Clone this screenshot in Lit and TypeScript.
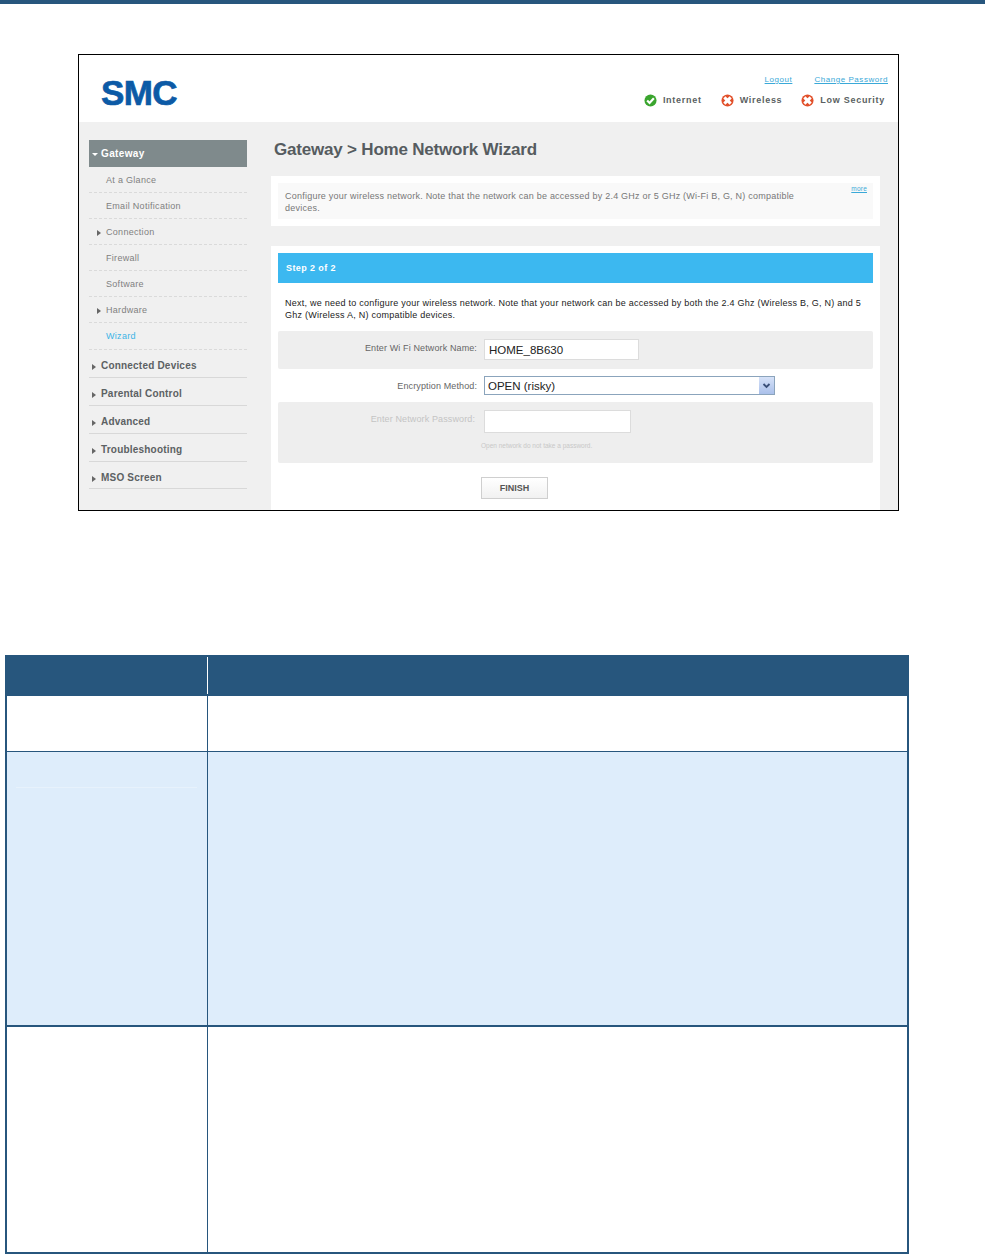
import { LitElement, html, css, svg } from "lit";
import { customElement } from "lit/decorators.js";

const subItems = [
  { label: "At a Glance" },
  { label: "Email Notification" },
  { label: "Connection", arrow: true },
  { label: "Firewall" },
  { label: "Software" },
  { label: "Hardware", arrow: true },
  { label: "Wizard", active: true },
];

const topItems = ["Connected Devices", "Parental Control", "Advanced", "Troubleshooting", "MSO Screen"];

const okIcon = svg`<svg class="status-icon" viewBox="0 0 14 14">
  <circle cx="7" cy="7" r="6.5" fill="#3aa52e"/>
  <path d="M3.4 7 6 9.6 10.6 4.6" fill="none" stroke="#fff" stroke-width="2.4"/>
</svg>`;

const badIcon = svg`<svg class="status-icon" viewBox="0 0 14 14">
  <circle cx="7" cy="7" r="6.5" fill="#e2502a"/>
  <path d="M3.6 3.6 10.4 10.4M10.4 3.6 3.6 10.4" stroke="#fff" stroke-width="3.2"/>
  <circle cx="7" cy="7" r="1.6" fill="#fff"/>
</svg>`;

@customElement("app-root")
export class AppRoot extends LitElement {
  static styles = css`
    :host {
      display: block;
      width: 985px;
      height: 1254px;
      overflow: hidden;
      background: #fff;
      font-family: "Liberation Sans", Arial, sans-serif;
    }

    .top-rule {
      height: 4px;
      background: #27567d;
    }

    /* router screenshot */
    .shot {
      box-sizing: border-box;
      width: 821px;
      height: 457px;
      margin: 50px 0 0 78px;
      border: 1px solid #000;
      overflow: hidden;
      background: #f0f0f0;
    }

    .shot-head {
      height: 67px;
      background: #fff;
      display: flex;
      justify-content: space-between;
      padding: 0 10px 0 22px;
    }

    .logo {
      margin-top: 19px;
      font-size: 35px;
      line-height: 37px;
      font-weight: 700;
      letter-spacing: -0.6px;
      color: #0c5aa6;
      -webkit-text-stroke: 0.7px #0c5aa6;
    }

    .head-right {
      display: flex;
      flex-direction: column;
      align-items: flex-end;
    }

    .links {
      display: flex;
      gap: 22px;
      margin-top: 20px;
      font-size: 8px;
      line-height: 10px;
      letter-spacing: 0.55px;
      color: #3aa9d8;
      text-decoration: underline;
    }

    .status {
      display: flex;
      gap: 19px;
      margin: 8px 3px 0 0;
      font-size: 9px;
      line-height: 14px;
      font-weight: 700;
      letter-spacing: 0.72px;
      color: #5a5f62;
    }

    .status span {
      display: flex;
      align-items: center;
      gap: 6px;
    }

    .status-icon {
      width: 13px;
      height: 13px;
    }

    .shot-body {
      display: flex;
      padding-left: 10px;
    }

    .side {
      width: 158px;
      margin-top: 18px;
      flex: none;
    }

    .side-head {
      height: 27px;
      background: #7f8a8c;
      color: #fff;
      font-size: 10px;
      font-weight: 700;
      line-height: 27px;
      letter-spacing: 0.35px;
      padding-left: 3px;
      display: flex;
      align-items: center;
      gap: 3px;
    }

    .side-head i {
      width: 0;
      height: 0;
      border: 3px solid transparent;
      border-top-color: #fff;
      border-bottom: 0;
      margin-top: 2px;
    }

    .sub {
      position: relative;
      height: 26px;
      box-sizing: border-box;
      border-bottom: 1px dashed #dadada;
      padding: 1px 0 0 17px;
      font-size: 9px;
      line-height: 25px;
      letter-spacing: 0.3px;
      color: #808080;
    }

    .sub.active {
      height: 27px;
      color: #3cb4e6;
    }

    .sub i,
    .top i {
      position: absolute;
      width: 0;
      height: 0;
      border: 3px solid transparent;
      border-left: 4px solid #666;
      border-right: 0;
    }

    .sub i {
      left: 8px;
      top: 11px;
    }

    .top {
      position: relative;
      height: 28px;
      box-sizing: border-box;
      border-bottom: 1px solid #d8d8d8;
      padding-left: 12px;
      font-size: 10px;
      font-weight: 700;
      line-height: 31px;
      letter-spacing: 0.2px;
      color: #5c6163;
    }

    .top:first-of-type {
      height: 29px;
    }

    .top:last-child {
      height: 27px;
    }

    .top i {
      left: 3px;
      top: 14px;
    }

    .main {
      margin-left: 24px;
      width: 609px;
    }

    .title {
      margin: 0;
      padding: 17px 0 0 3px;
      height: 37px;
      box-sizing: border-box;
      font-size: 17px;
      line-height: 21px;
      font-weight: 700;
      letter-spacing: -0.2px;
      color: #565c60;
      white-space: nowrap;
    }

    .info {
      margin-top: 17px;
      background: #fff;
      padding: 7px;
      height: 50px;
      box-sizing: border-box;
    }

    .info-inner {
      position: relative;
      box-sizing: border-box;
      height: 36px;
      background: #f9f9f9;
      padding: 7px 70px 0 7px;
      font-size: 9px;
      line-height: 12px;
      letter-spacing: 0.23px;
      color: #777;
    }

    .more {
      position: absolute;
      right: 6px;
      top: 1px;
      font-size: 6.5px;
      line-height: 10px;
      color: #3aa9d8;
      text-decoration: underline;
    }

    .panel {
      margin-top: 20px;
      height: 300px;
      background: #fff;
      padding: 7px;
      box-sizing: border-box;
    }

    .step {
      height: 30px;
      background: #3cb8f0;
      color: #fff;
      font-size: 9px;
      font-weight: 700;
      line-height: 30px;
      letter-spacing: 0.4px;
      padding-left: 8px;
    }

    .intro {
      margin: 14px 0 0;
      padding: 0 0 0 7px;
      height: 34px;
      font-size: 9px;
      line-height: 12px;
      letter-spacing: 0.25px;
      color: #222;
    }

    .row {
      display: flex;
      align-items: flex-start;
      border-radius: 2px;
    }

    .row.shade {
      background: #eeeeee;
    }

    .row label {
      width: 199px;
      text-align: right;
      font-size: 9px;
      line-height: 12px;
      letter-spacing: 0.12px;
      color: #666;
      white-space: nowrap;
    }

    .row.off label {
      width: 197px;
      margin-right: 2px;
      color: #c4c4c4;
    }

    .field {
      box-sizing: border-box;
      margin-left: 7px;
      background: #fff;
      border: 1px solid #dcdcdc;
      font-size: 11.5px;
      color: #222;
      padding-left: 4px;
    }

    .name-row {
      height: 38px;
      padding-top: 8px;
      box-sizing: border-box;
    }

    .name-row label {
      margin-top: 3px;
    }

    .name-row .field {
      width: 155px;
      height: 21px;
      line-height: 20px;
    }

    .enc-row {
      height: 33px;
      padding-top: 7px;
      box-sizing: border-box;
    }

    .enc-row label {
      margin-top: 4px;
    }

    .select {
      position: relative;
      width: 291px;
      height: 19px;
      line-height: 19px;
      padding-left: 3px;
      border-color: #8ba4bc;
    }

    .select svg {
      position: absolute;
      right: 0;
      top: 0;
      width: 15px;
      height: 17px;
    }

    .pass-row {
      height: 61px;
      padding-top: 8px;
      box-sizing: border-box;
    }

    .pass-row label {
      margin-top: 3px;
    }

    .pass-row .field {
      width: 147px;
      height: 23px;
    }

    .hint {
      margin: 8px 0 0 4px;
      font-size: 6.5px;
      line-height: 10px;
      color: #c8c8c8;
      white-space: nowrap;
    }

    .actions {
      padding: 14px 0 0 203px;
    }

    .finish {
      box-sizing: border-box;
      width: 67px;
      height: 22px;
      border: 1px solid #cfcfcf;
      background: linear-gradient(#fff, #f1f1f1);
      font-family: inherit;
      font-size: 9px;
      font-weight: 700;
      color: #555;
      padding: 0;
    }

    /* parameter table below the screenshot */
    .table {
      box-sizing: border-box;
      width: 904px;
      height: 599px;
      margin: 144px 0 0 5px;
      display: grid;
      grid-template-columns: 201px 1fr;
      grid-template-rows: 41px 56px 275px 1fr;
      border: solid #27567d;
      border-width: 0 2px 2px;
    }

    .th {
      background: #27567d;
      position: relative;
    }

    .th.first {
      margin-left: -2px;
    }

    .th.first::after {
      content: "";
      position: absolute;
      right: 0;
      top: 2px;
      bottom: 2px;
      width: 1px;
      background: #fff;
    }

    .th.last {
      margin-right: -2px;
    }

    .td {
      border-bottom: 1px solid #27567d;
    }

    .td.name {
      border-right: 1px solid #27567d;
    }

    .td.tinted {
      background: #deedfb;
    }

    .td.heavy {
      border-bottom-width: 2px;
    }

    .td.end {
      border-bottom: 0;
    }

    .faint-rule {
      height: 1px;
      margin: 35px 10px 0 9px;
      background: #e7f2fc;
    }
  `;

  render() {
    return html`
      <div class="top-rule"></div>
      <div class="shot">
        <div class="shot-head">
          <div class="logo">SMC</div>
          <div class="head-right">
            <div class="links"><span>Logout</span><span>Change Password</span></div>
            <div class="status">
              <span>${okIcon}Internet</span>
              <span>${badIcon}Wireless</span>
              <span>${badIcon}Low Security</span>
            </div>
          </div>
        </div>
        <div class="shot-body">
          <nav class="side">
            <div class="side-head"><i></i>Gateway</div>
            ${subItems.map(
              (item) => html`<div class="sub ${item.active ? "active" : ""}">
                ${item.arrow ? html`<i></i>` : ""}${item.label}
              </div>`
            )}
            ${topItems.map((label) => html`<div class="top"><i></i>${label}</div>`)}
          </nav>
          <div class="main">
            <h1 class="title">Gateway &gt; Home Network Wizard</h1>
            <div class="info">
              <div class="info-inner">
                Configure your wireless network. Note that the network can be accessed by 2.4 GHz or 5 GHz (Wi-Fi B, G, N) compatible devices.
                <span class="more">more</span>
              </div>
            </div>
            <div class="panel">
              <div class="step">Step 2 of 2</div>
              <p class="intro">
                Next, we need to configure your wireless network. Note that your network can be accessed by both the 2.4 Ghz (Wireless B, G, N) and 5 Ghz (Wireless A, N) compatible devices.
              </p>
              <div class="row shade name-row">
                <label>Enter Wi Fi Network Name:</label>
                <div class="field">HOME_8B630</div>
              </div>
              <div class="row enc-row">
                <label>Encryption Method:</label>
                <div class="field select">
                  OPEN (risky)
                  <svg viewBox="0 0 15 17">
                    <defs>
                      <linearGradient id="arrow-bg" x1="0" y1="0" x2="0" y2="1">
                        <stop offset="0" stop-color="#d6e2f8"/>
                        <stop offset="1" stop-color="#aac0ea"/>
                      </linearGradient>
                    </defs>
                    <rect width="15" height="17" fill="url(#arrow-bg)"/>
                    <path d="M4.5 7 7.5 10 10.5 7" fill="none" stroke="#3a4f78" stroke-width="1.8"/>
                  </svg>
                </div>
              </div>
              <div class="row shade off pass-row">
                <label>Enter Network Password:</label>
                <div>
                  <div class="field"></div>
                  <div class="hint">Open network do not take a password.</div>
                </div>
              </div>
              <div class="actions"><button class="finish">FINISH</button></div>
            </div>
          </div>
        </div>
      </div>
      <div class="table">
        <div class="th first"></div>
        <div class="th last"></div>
        <div class="td name"></div>
        <div class="td value"></div>
        <div class="td name tinted heavy"><div class="faint-rule"></div></div>
        <div class="td value tinted heavy"></div>
        <div class="td name end"></div>
        <div class="td value end"></div>
      </div>
    `;
  }
}
